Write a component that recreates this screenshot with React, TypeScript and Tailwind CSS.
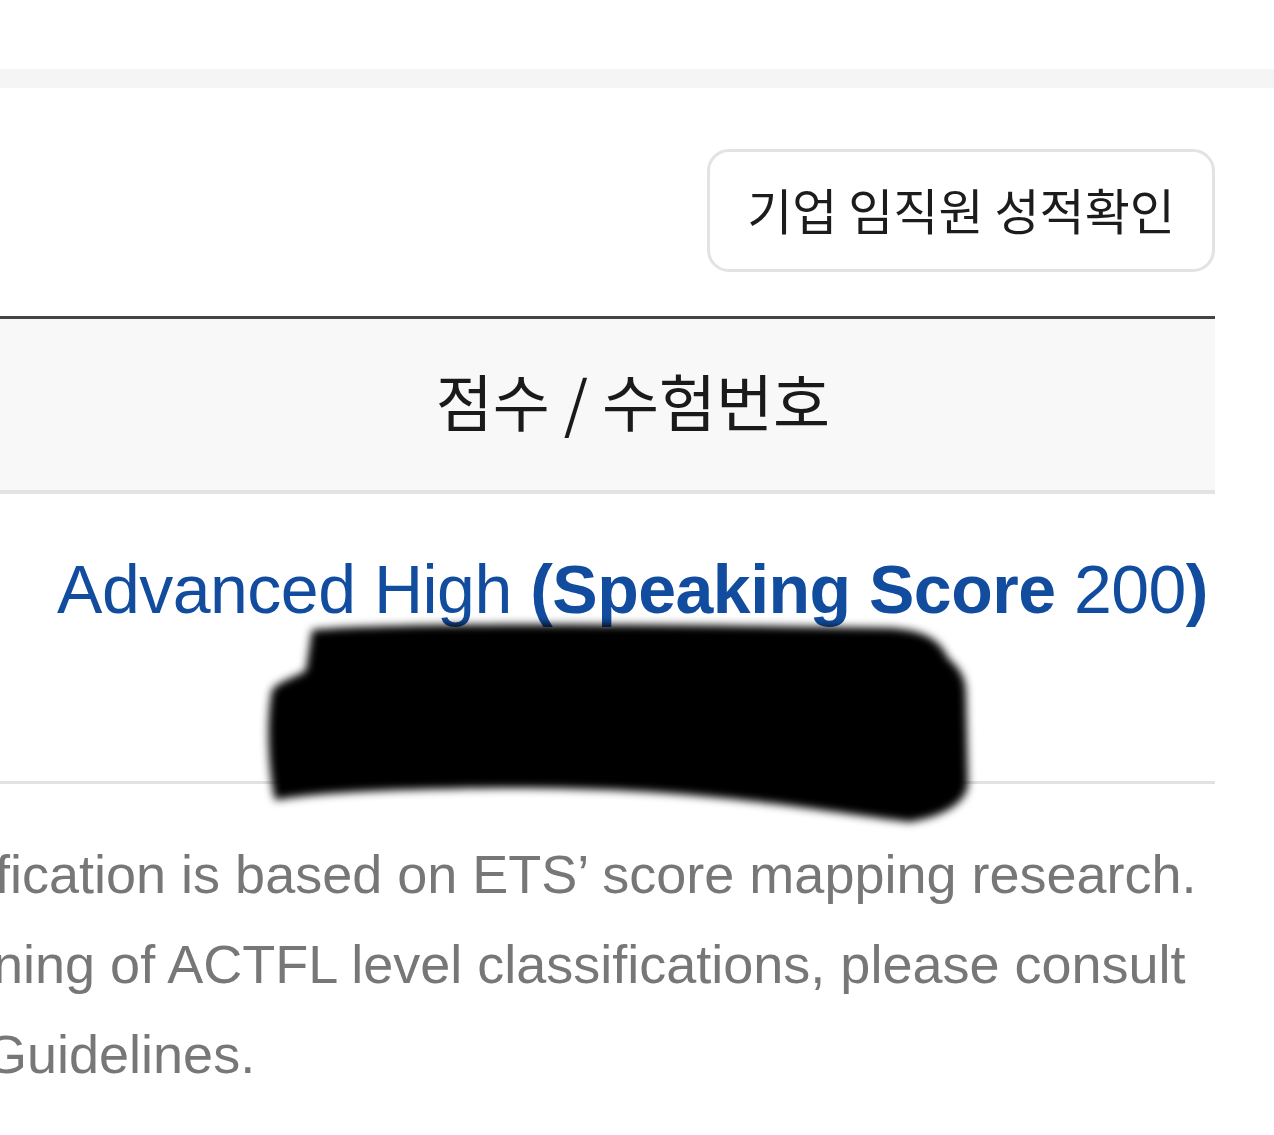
import React from "react";

const sans = { fontFamily: '"Liberation Sans", Arial, sans-serif' } as React.CSSProperties;

function Redaction() {
  return (
    <svg
      className="absolute left-[250px] top-[610px]"
      width="740"
      height="230"
      viewBox="0 0 740 230"
    >
      <defs>
        <filter id="soft" x="-10%" y="-10%" width="120%" height="120%">
          <feGaussianBlur stdDeviation="4" />
        </filter>
      </defs>
      <path
        filter="url(#soft)"
        fill="#000"
        d="M62 20 C150 12 400 14 640 18 C675 20 690 30 698 48 C712 60 716 70 716 85 L718 175 C716 190 700 205 660 212 C600 205 520 190 400 182 C300 176 220 178 150 180 C100 182 60 184 25 190 C18 160 16 110 22 80 C30 70 50 66 56 60 Z"
      />
    </svg>
  );
}

export default function App() {
  return (
    <div className="relative w-[1274px] h-[1135px] bg-white overflow-hidden" style={sans}>
      <div className="h-[69px]" />
      <div className="h-[19px] bg-[#f5f5f5]" />
      <div className="w-[1215px]">
        <div className="flex justify-end pt-[61px]">
          <button
            className="w-[508px] h-[123px] rounded-[22px] border-[3px] border-[#e3e3e3] bg-white flex items-center justify-center pb-[4px] text-[#1c1c1c] text-[49px]"
            style={{ fontFamily: '"Noto Sans CJK KR", "Liberation Sans", sans-serif' }}
          >
            기업 임직원 성적확인
          </button>
        </div>
        <div className="mt-[44px] border-t-[3px] border-[#444444]">
          <div
            className="h-[171px] bg-[#f8f8f8] flex items-center justify-center pl-[51px] pb-[8px] text-[62px] text-[#1a1a1a]"
            style={{ fontFamily: '"Noto Sans CJK KR", "Liberation Sans", sans-serif' }}
          >
            점수 / 수험번호
          </div>
          <div className="h-[4px] bg-[#e3e3e3]" />
          <div className="h-[290px] pt-[61px] text-right pr-[7px] border-b-[3px] border-[#e2e2e2]">
            <div className="text-[68px] leading-none text-[#114c9f] whitespace-nowrap tracking-[-0.5px]">
              Advanced High <span className="font-bold">(Speaking Score</span> 200<span className="font-bold">)</span>
            </div>
          </div>
        </div>
        <div className="mt-[45px] text-[54px] leading-[90px] text-[#777777] whitespace-nowrap">
          <div className="-ml-[5px]">fication is based on ETS’ score mapping research.</div>
          <div className="-ml-[7px]">ning of ACTFL level classifications, please consult</div>
          <div className="-ml-[15px]">Guidelines.</div>
        </div>
      </div>
      <Redaction />
    </div>
  );
}
